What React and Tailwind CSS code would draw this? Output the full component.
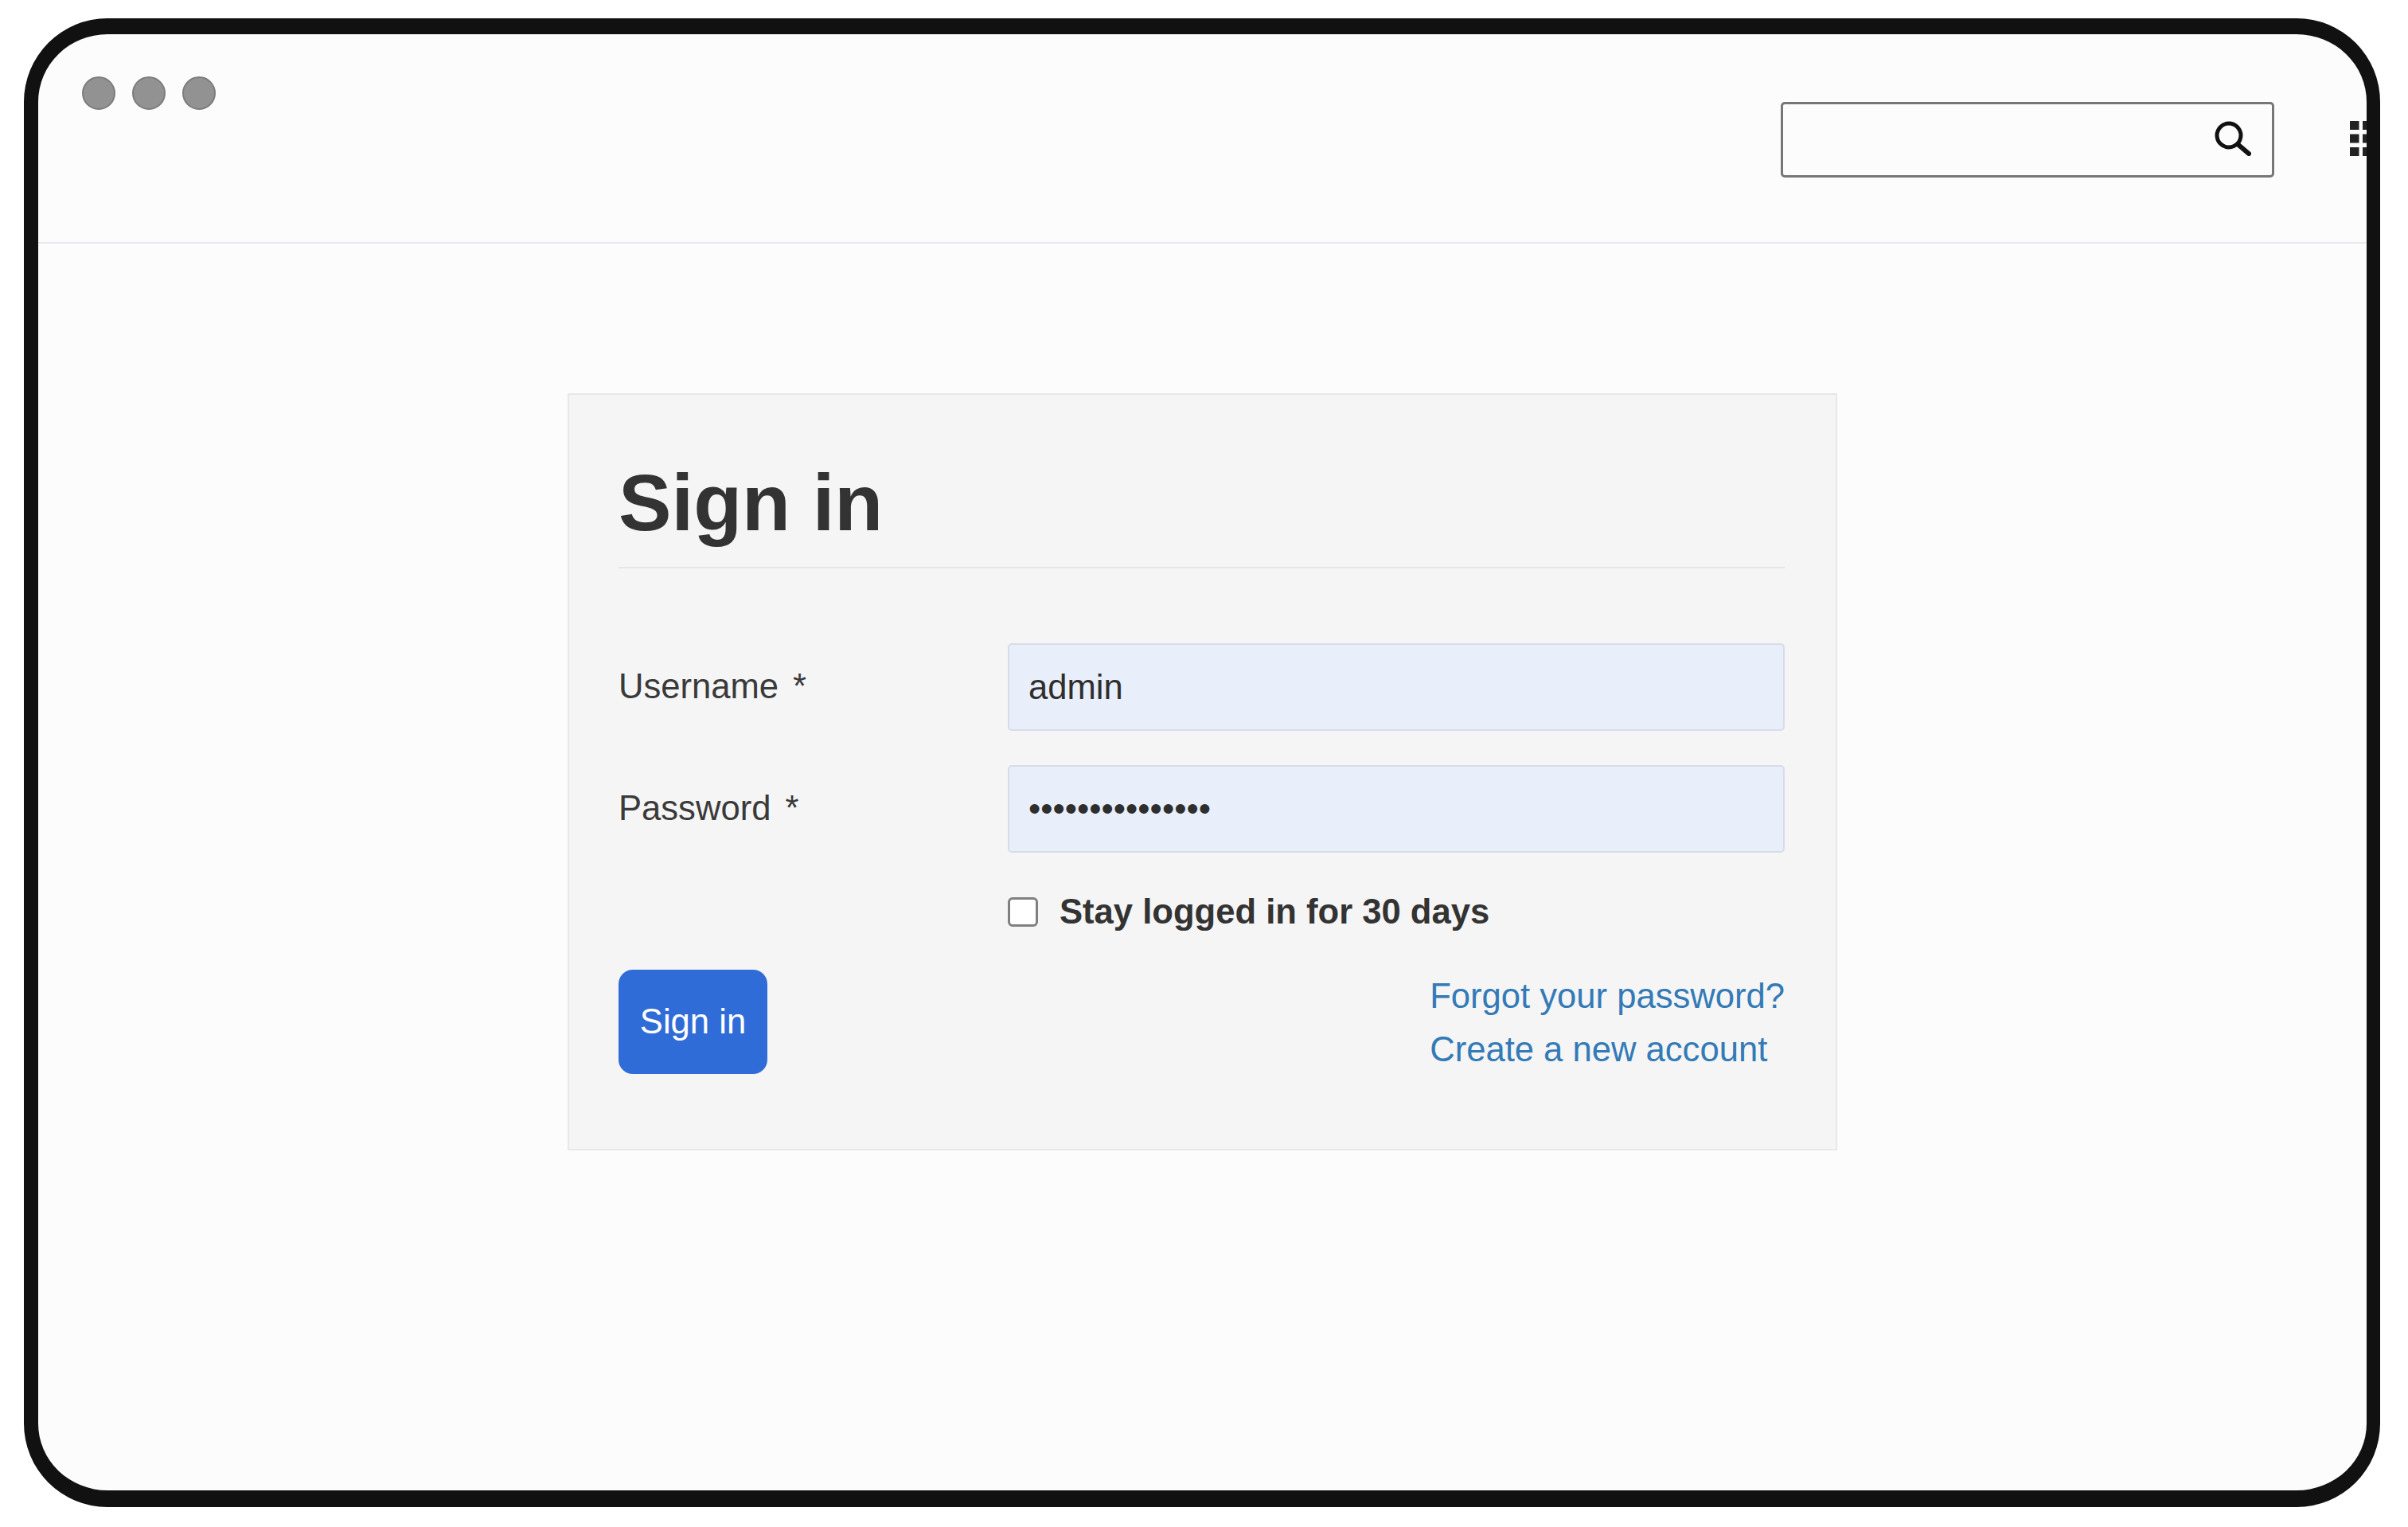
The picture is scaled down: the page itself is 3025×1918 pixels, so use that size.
import React from 'react';

const SearchIcon = () => (
    <svg width="46" height="44" viewBox="0 0 46 44" fill="none" stroke="#111" strokeLinecap="round">
        <circle cx="18" cy="18" r="15" strokeWidth="5" />
        <line x1="29.5" y1="29.5" x2="43" y2="41" strokeWidth="6" />
    </svg>
);

const GridIcon = () => (
    <svg width="45" height="44" viewBox="0 0 45 44" fill="#222" className="shrink-0 -mr-[24px] mb-[3px]">
        {[0, 16.5, 33].map(y => [0, 16, 32].map(x => (
            <rect key={`${x}-${y}`} x={x} y={y} width="11.5" height="11" />
        )))}
    </svg>
);

const Field = ({ label, type, value }) => (
    <div className="flex items-center">
        <label className="w-[489px] shrink-0 text-[#3a3a3a]">
            {label}<span className="ml-[18px]">*</span>
        </label>
        <input
            type={type}
            value={value}
            readOnly
            className="w-[976px] h-[110px] px-6 bg-[#e8eefa] border-2 border-[#d6dde9] rounded-[5px] text-[#2e2e2e] outline-none"
        />
    </div>
);

export default function App() {
    return (
        <div className="w-[3025px] h-[1918px] bg-white pt-[23px] pl-[30px] font-['Liberation_Sans',Arial,sans-serif] text-[43.6px]">
            <div className="w-[2960px] h-[1870px] bg-[#fcfcfc] border-[#111111] border-l-[18px] border-r-[17px] border-t-[20px] border-b-[21px] rounded-[105px] overflow-hidden">
                {/* Top bar */}
                <div className="h-[263px] flex items-start pl-[55px] border-b-2 border-[#e8e9ee]">
                    <div className="flex gap-[21px] mt-[53px] mr-auto">
                        <div className="w-[42px] h-[42px] rounded-full bg-[#929292] border-2 border-[#7c7c7c]"></div>
                        <div className="w-[42px] h-[42px] rounded-full bg-[#929292] border-2 border-[#7c7c7c]"></div>
                        <div className="w-[42px] h-[42px] rounded-full bg-[#929292] border-2 border-[#7c7c7c]"></div>
                    </div>
                    <div className="flex items-center gap-[95px] mt-[85px]">
                        <div className="w-[620px] h-[95px] flex items-center justify-end pr-[26px] pb-[4px] border-[3px] border-[#777777] rounded-[5px]">
                            <SearchIcon />
                        </div>
                        <GridIcon />
                    </div>
                </div>

                {/* Login card */}
                <div className="w-[1595px] mt-[188px] mx-auto pl-[62px] pr-[64px] pt-[87px] pb-[91px] bg-[#f5f5f5] border-2 border-[#e6e8ea]">
                    <h1 className="text-[99.7px] leading-[98px] font-bold text-[#333333] pb-[31px] border-b-2 border-[#e6e6e6]">Sign in</h1>
                    <div className="flex flex-col gap-[43px] mt-[94px]">
                        <Field label="Username" type="text" value="admin" />
                        <Field label="Password" type="password" value="123456789012345" />
                    </div>
                    <div className="flex items-center gap-[27px] pl-[489px] mt-[53px] leading-none">
                        <input type="checkbox" readOnly className="appearance-none w-[38px] h-[37px] bg-white border-[3px] border-[#808080] rounded-[6px]" />
                        <span className="font-bold text-[#333333]">Stay logged in for 30 days</span>
                    </div>
                    <div className="flex justify-between items-start mt-[50px]">
                        <button className="w-[187px] h-[131px] pt-[2px] bg-[#306cd8] text-white rounded-[18px]">Sign in</button>
                        <div className="flex flex-col leading-[67px] text-[#337ab7]">
                            <a href="#">Forgot your password?</a>
                            <a href="#">Create a new account</a>
                        </div>
                    </div>
                </div>
            </div>
        </div>
    );
}
